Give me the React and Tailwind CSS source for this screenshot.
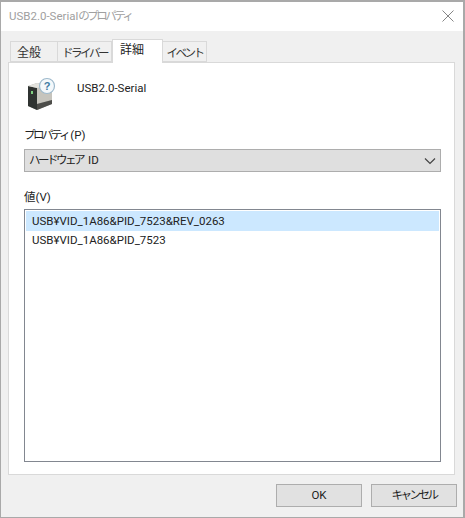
import React from "react";

const font = { fontFamily: 'Roboto, "Noto Sans CJK JP", sans-serif' };

function Kana({ children }) {
  return <span className="tracking-[-2.5px] text-[11.5px]">{children}</span>;
}

function DeviceIcon() {
  return (
    <svg width="32" height="34" viewBox="0 0 32 34">
      <path d="M0 9 L9 6 L24 9 L24 27 L9 33 L0 29 Z" fill="#a8a8a2" />
      <path d="M0 9 L9 11 L9 33 L0 29 Z" fill="#2f3331" />
      <path d="M9 11 L24 9 L24 23 L9 27 Z" fill="#c6c4bd" />
      <path d="M9 27 L24 23 L24 27 L9 33 Z" fill="#4d4d4a" />
      <path d="M0 9 L9 6 L24 9 L9 11 Z" fill="#e4e3de" />
      <rect x="3" y="14" width="2" height="3" fill="#7fd080" />
      <circle cx="19" cy="9" r="7.5" fill="#f4f8fb" stroke="#9db9cc" strokeWidth="1.2" />
      <text x="19" y="13" textAnchor="middle" fontSize="11" fontWeight="700" fill="#3f7ba3" fontFamily="Liberation Sans, sans-serif">?</text>
    </svg>
  );
}

function Tab({ children, active, w }) {
  return active ? (
    <div className={`${w} h-[24px] bg-white border border-b-0 border-[#d9d9d9] text-[12px] leading-[20px] pl-[7px] text-[#222] relative z-10 -mb-px`}>
      {children}
    </div>
  ) : (
    <div className={`${w} h-[21px] bg-[#f0f0f0] border border-[#d9d9d9] -ml-px text-[12px] leading-[22px] text-center text-[#333] whitespace-nowrap`}>
      {children}
    </div>
  );
}

export default function App() {
  return (
    <div style={font} className="w-[465px] h-[518px] bg-[#f0f0f0] flex flex-col border-t-2 border-l border-r-2 border-b border-[#a9a9a9] overflow-hidden text-[#222]">
      <div className="h-[29px] bg-white flex items-center justify-between pl-[8px] pr-[9px] shrink-0">
        <span className="text-[11.5px] text-[#a0a0a0] leading-none">USB2.0-Serial<Kana>のプロパティ</Kana></span>
        <svg width="12" height="12" viewBox="0 0 12 12" className="mb-px">
          <path d="M0.5 0.5 L11.5 11.5 M11.5 0.5 L0.5 11.5" stroke="#777" strokeWidth="0.9" fill="none" />
        </svg>
      </div>

      <div className="flex items-end pl-[10px] h-[31px] shrink-0">
        <div className="flex items-end">
          <Tab w="w-[48px] pr-[10px]">全般</Tab>
          <Tab w="w-[55px]"><Kana>ドライバー</Kana></Tab>
          <Tab active w="w-[51px]">詳細</Tab>
          <Tab w="w-[45px]"><Kana>イベント</Kana></Tab>
        </div>
      </div>

      <div className="ml-[7px] w-[447px] h-[413px] bg-white border border-[#d9d9d9] pl-[15px] pr-[13px] shrink-0 flex flex-col">
        <div className="flex items-start h-[33px] mt-[14px] pl-[4px]">
          <DeviceIcon />
          <span className="ml-[17px] mt-[4px] text-[11.5px] leading-[14px]">USB2.0-Serial</span>
        </div>

        <div className="text-[11.5px] leading-[16px] mt-[17px]"><Kana>プロパティ</Kana><span className="ml-[2px]">(P)</span></div>
        <div className="mt-[6px] h-[23px] bg-[#dfdfdf] border border-[#adadad] flex items-center justify-between pl-[4px] pr-[4px]">
          <span className="text-[11.5px] leading-none"><Kana>ハードウェア</Kana><span className="ml-[5px]">ID</span></span>
          <svg width="12" height="8" viewBox="0 0 12 8">
            <path d="M1 1.5 L6 6.5 L11 1.5" stroke="#444" strokeWidth="1.2" fill="none" />
          </svg>
        </div>

        <div className="text-[11.5px] leading-[16px] mt-[17px]">値(V)</div>
        <div className="mt-[4px] h-[253px] bg-white border border-[#828790] p-px">
          <div className="h-[20px] bg-[#cce8ff] pl-[6px] text-[11.5px] leading-[21px]">USB¥VID_1A86&amp;PID_7523&amp;REV_0263</div>
          <div className="h-[19px] pl-[6px] text-[11.5px] leading-[19px]">USB¥VID_1A86&amp;PID_7523</div>
        </div>
      </div>

      <div className="flex justify-end gap-[9px] pr-[6px] mt-[9px]">
        <div className="w-[86px] h-[23px] bg-[#e1e1e1] border border-[#adadad] flex items-center justify-center text-[11.5px]">OK</div>
        <div className="w-[86px] h-[23px] bg-[#e1e1e1] border border-[#adadad] flex items-center justify-center text-[11.5px]"><Kana>キャンセル</Kana></div>
      </div>
    </div>
  );
}
